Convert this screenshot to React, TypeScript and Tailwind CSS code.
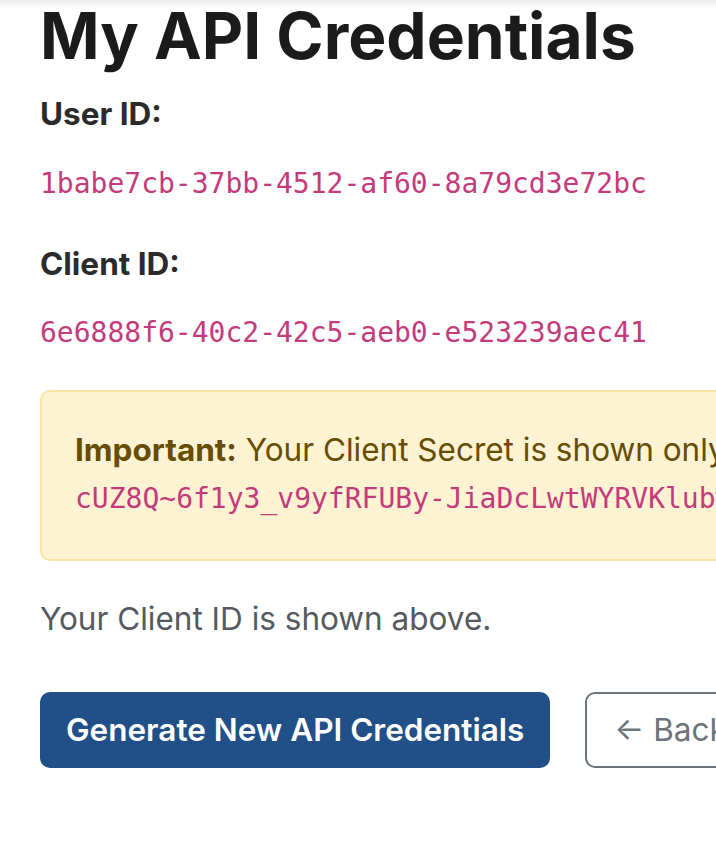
import React from 'react';

export default function App() {
  const userId = '1babe7cb-37bb-4512-af60-8a79cd3e72bc';
  const clientId = '6e6888f6-40c2-42c5-aeb0-e523239aec41';
  const secret = 'cUZ8Q~6f1y3_v9yfRFUBy-JiaDcLwtWYRVKlubw7Qx2';

  return (
    <div className="w-[716px] h-[856px] overflow-hidden bg-white font-['Inter',sans-serif]">
      <div className="h-[8px] bg-gradient-to-b from-[#ececec] to-white" />
      <div className="w-[1300px] pl-[40px] -mt-[8px]">
        <h1 className="text-[64px] leading-[72px] font-bold text-[#1b1b1b]">My API Credentials</h1>

        <div className="mt-[22px]">
          <h3 className="text-[31.5px] leading-[40px] font-bold text-[#2b2b2b]">User ID:</h3>
          <p className="mt-[33px] text-[28px] leading-[34px] font-['DejaVu_Sans_Mono',monospace] text-[#c43b7c]">{userId}</p>
        </div>

        <div className="mt-[43px]">
          <h3 className="text-[31.5px] leading-[40px] font-bold text-[#2b2b2b]">Client ID:</h3>
          <p className="mt-[32px] text-[28px] leading-[34px] font-['DejaVu_Sans_Mono',monospace] text-[#c43b7c]">{clientId}</p>
        </div>

        <div className="mt-[40px] rounded-[10px] border-2 border-[#fae3a0] bg-[#fdf2d2] px-[33px] pt-[36px] pb-[41px] text-[31.5px] text-[#664d03]">
          <p className="leading-[44px] whitespace-nowrap">
            <strong className="font-bold">Important:</strong> Your Client Secret is shown only once. Copy it now and store it somewhere safe.
          </p>
          <p className="mt-[8px] leading-[38px] text-[28px] font-['DejaVu_Sans_Mono',monospace] text-[#c43b7c]">{secret}</p>
        </div>

        <p className="mt-[36px] text-[31.5px] leading-[44px] text-[#555a60]">Your Client ID is shown above.</p>

        <div className="mt-[51px] flex gap-[35px]">
          <button className="h-[76px] rounded-[10px] bg-[#214f87] px-[26px] text-[31.5px] font-semibold text-white">
            Generate New API Credentials
          </button>
          <button className="h-[76px] rounded-[10px] border-2 border-[#6c737b] bg-white px-[27px] text-[31.5px] text-[#6c737b]">
            ← Back to Dashboard
          </button>
        </div>
      </div>
    </div>
  );
}
